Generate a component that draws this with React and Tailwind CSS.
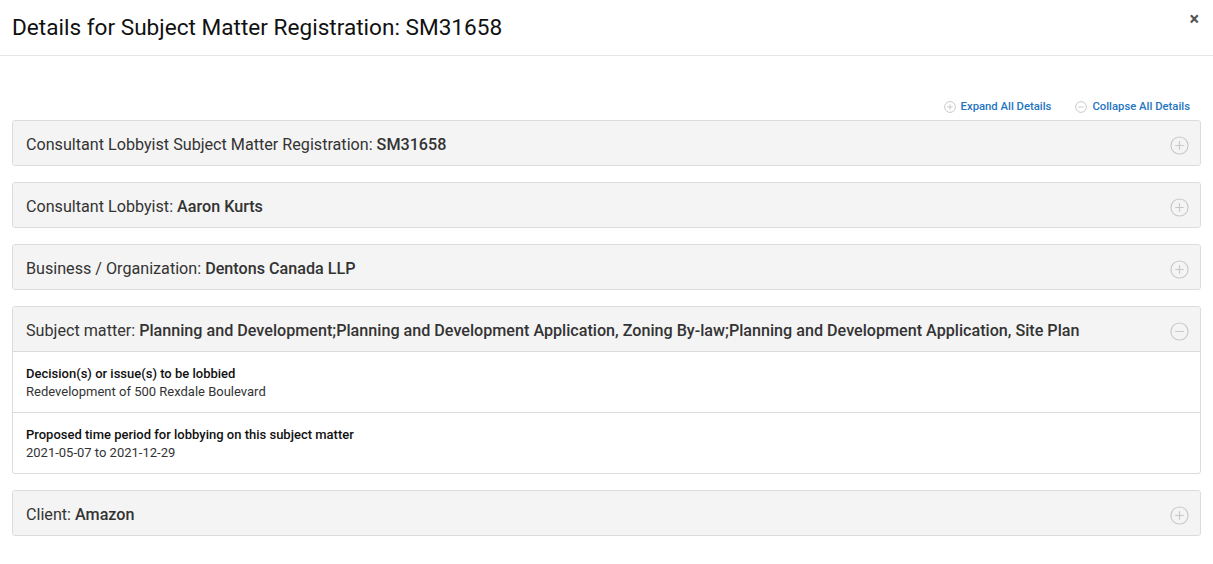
import React from 'react'

const font = { fontFamily: 'Roboto, "Liberation Sans", sans-serif' }

function CircleIcon({ minus, size = 19, color = '#c8c8c8' }) {
  return (
    <svg width={size} height={size} viewBox="0 0 20 20" fill="none" stroke={color} strokeWidth="1.2">
      <circle cx="10" cy="10" r="9" />
      <line x1="5.5" y1="10" x2="14.5" y2="10" />
      {!minus && <line x1="10" y1="5.5" x2="10" y2="14.5" />}
    </svg>
  )
}

function Panel({ label, value, open, children }) {
  return (
    <div className="border border-[#dcdcdc] rounded-[3px] bg-white overflow-hidden">
      <div className="flex items-start justify-between h-[44px] pl-[13px] pr-[11px] bg-[#f4f4f4]">
        <div className="text-[16.15px] text-[#333] pt-[14px] leading-[20px]">
          {label} <span className="font-medium">{value}</span>
        </div>
        <div className="pt-[15px]">
          <CircleIcon minus={open} />
        </div>
      </div>
      {open && <div className="border-t border-[#dcdcdc]">{children}</div>}
    </div>
  )
}

function Row({ label, value, last }) {
  return (
    <div className={`px-[13px] pt-[13px] pb-[11px] ${last ? '' : 'border-b border-[#dcdcdc]'}`}>
      <div className="text-[13px] font-medium text-[#111] leading-[18px]">{label}</div>
      <div className="text-[13px] text-[#333] leading-[18px]">{value}</div>
    </div>
  )
}

export default function App() {
  return (
    <div className="w-[1213px] min-h-[564px] bg-white" style={font}>
      <div className="flex items-start justify-between h-[56px] border-b border-[#e5e5e5] pl-[12px] pr-[14px]">
        <h1 className="text-[22.6px] text-[#111] pt-[13px] leading-[30px]">
          Details for Subject Matter Registration: SM31658
        </h1>
        <button className="text-[#555] text-[18px] font-bold pt-[7px] leading-[24px]">×</button>
      </div>

      <div className="px-[12px] pt-[43px]">
        <div className="flex justify-end gap-[24px] pr-[11px] pb-[4px]">
          <button className="flex items-center gap-[5px] text-[11.3px] font-medium text-[#1f75bf]">
            <CircleIcon size={12} color="#b5b5b5" /> Expand All Details
          </button>
          <button className="flex items-center gap-[5px] text-[11.3px] font-medium text-[#1f75bf]">
            <CircleIcon minus size={12} color="#b5b5b5" /> Collapse All Details
          </button>
        </div>

        <div className="flex flex-col gap-[16px]">
          <Panel label="Consultant Lobbyist Subject Matter Registration:" value="SM31658" />
          <Panel label="Consultant Lobbyist:" value="Aaron Kurts" />
          <Panel label="Business / Organization:" value="Dentons Canada LLP" />
          <Panel
            label="Subject matter:"
            value="Planning and Development;Planning and Development Application, Zoning By-law;Planning and Development Application, Site Plan"
            open
          >
            <Row label="Decision(s) or issue(s) to be lobbied" value="Redevelopment of 500 Rexdale Boulevard" />
            <Row label="Proposed time period for lobbying on this subject matter" value="2021-05-07 to 2021-12-29" last />
          </Panel>
          <Panel label="Client:" value="Amazon" />
        </div>
      </div>
    </div>
  )
}
